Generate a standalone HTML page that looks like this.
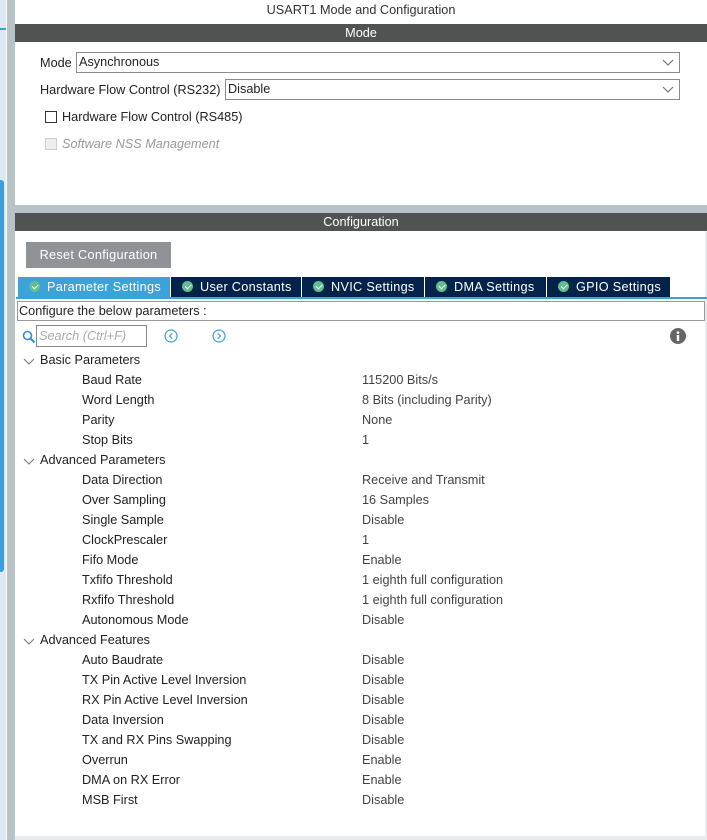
<!DOCTYPE html>
<html><head><style>
*{margin:0;padding:0;box-sizing:border-box}
body{width:707px;height:840px;position:relative;overflow:hidden;background:#fff;font-family:"Liberation Sans",sans-serif;font-size:12.7px;color:#222}
.a{position:absolute;white-space:nowrap}
.bar{position:absolute;left:15px;right:0;height:18px;background:#515352;color:#fff;text-align:center;font-size:12.7px;line-height:18px}
.sel{position:absolute;height:21px;border:1px solid #8c8c8c;background:#fff;padding-left:2px;line-height:19px}
.sel svg{position:absolute;right:5px;top:6px}
.tab{position:absolute;top:277px;height:20px;background:#03234b;color:#fff;line-height:20px;padding-left:29px;letter-spacing:.3px}
.tab::before{content:"";position:absolute;left:11px;top:4px;width:11px;height:11px;border-radius:50%;background:#5fbf8e}
.tab::after{content:"";position:absolute;left:14px;top:6.5px;width:5px;height:2.5px;border-left:1.6px solid #fff;border-bottom:1.6px solid #fff;transform:rotate(-45deg)}
.n{position:absolute;left:82px}
.v{position:absolute;left:362px;color:#444}
.h{position:absolute;left:40px}
.chev{position:absolute;left:23px}
</style></head><body>
<div class="a" style="left:0;top:0;width:6px;height:840px;background:#dce9f5"></div>
<div class="a" style="left:0;top:28px;width:6px;height:2px;background:#3c9fd8"></div>
<div class="a" style="left:0;top:180px;width:4px;height:392px;background:#3c9fd8;border-radius:0 3px 3px 0"></div>
<div class="a" style="left:7px;top:0;width:8px;height:840px;background:#b8c3c8"></div>
<div class="a" style="left:15px;top:205px;width:692px;height:8px;background:#b8c3c8"></div>
<div class="a" style="left:15px;top:836px;width:692px;height:4px;background:#e9ecee"></div>
<div class="a" style="left:705px;top:231px;width:2px;height:605px;background:#e9ecee"></div>

<div class="a" style="left:15px;right:0;top:3px;text-align:center;color:#333">USART1 Mode and Configuration</div>
<div class="bar" style="top:24px">Mode</div>
<div class="a" style="left:40px;top:56px">Mode</div>
<div class="sel" style="left:76px;top:52px;width:604px">Asynchronous<svg width="12" height="8"><path d="M1 1l5 5 5-5" fill="none" stroke="#777" stroke-width="1.2"/></svg></div>
<div class="a" style="left:40px;top:83px">Hardware Flow Control (RS232)</div>
<div class="sel" style="left:225px;top:79px;width:455px">Disable<svg width="12" height="8"><path d="M1 1l5 5 5-5" fill="none" stroke="#777" stroke-width="1.2"/></svg></div>
<div class="a" style="left:45px;top:111px;width:12px;height:12px;border:1px solid #333"></div>
<div class="a" style="left:62px;top:110px">Hardware Flow Control (RS485)</div>
<div class="a" style="left:45px;top:138px;width:12px;height:12px;border:1px solid #ccc;background:#eee"></div>
<div class="a" style="left:62px;top:137px;color:#999;font-style:italic">Software NSS Management</div>

<div class="bar" style="top:213px">Configuration</div>
<div class="a" style="left:26px;top:242px;width:145px;height:26px;background:#8f9396;color:#fff;text-align:center;line-height:26px;letter-spacing:.3px">Reset Configuration</div>
<div class="tab" style="left:18px;width:152px;background:#3ba3d8">Parameter Settings</div>
<div class="tab" style="left:171px;width:130px">User Constants</div>
<div class="tab" style="left:302px;width:122px">NVIC Settings</div>
<div class="tab" style="left:425px;width:121px">DMA Settings</div>
<div class="tab" style="left:547px;width:123px">GPIO Settings</div>
<div class="a" style="left:16px;top:297px;width:691px;height:2px;background:#3ba3d8"></div>
<div class="a" style="left:17px;top:301px;width:688px;height:20px;border:1px solid #999;padding-left:1px;line-height:18px">Configure the below parameters :</div>
<svg class="a" style="left:22px;top:330px" width="14" height="14"><circle cx="5.5" cy="5.5" r="4" fill="none" stroke="#2a8fd6" stroke-width="1.6"/><path d="M8.5 8.5l4 4" stroke="#2a8fd6" stroke-width="2"/></svg>
<div class="a" style="left:36px;top:325px;width:111px;height:22px;border:1px solid #888;padding-left:2px;line-height:20px;color:#aaa;font-style:italic">Search (Ctrl+F)</div>
<svg class="a" style="left:164px;top:329px" width="14" height="14"><circle cx="7" cy="7" r="6" fill="none" stroke="#3ba3d8" stroke-width="1.2"/><path d="M8.3 4.3L5.5 7l2.8 2.7" fill="none" stroke="#3ba3d8" stroke-width="1.2"/></svg>
<svg class="a" style="left:212px;top:329px" width="14" height="14"><circle cx="7" cy="7" r="6" fill="none" stroke="#3ba3d8" stroke-width="1.2"/><path d="M5.7 4.3L8.5 7l-2.8 2.7" fill="none" stroke="#3ba3d8" stroke-width="1.2"/></svg>
<svg class="a" style="left:670px;top:328px" width="16" height="16"><circle cx="8" cy="8" r="8" fill="#666"/><rect x="6.8" y="7" width="2.4" height="6" fill="#fff"/><circle cx="8" cy="4.6" r="1.3" fill="#fff"/></svg>

<div id="t"></div>
<script>
var rows=[["h","Basic Parameters"],["Baud Rate","115200 Bits/s"],["Word Length","8 Bits (including Parity)"],["Parity","None"],["Stop Bits","1"],["h","Advanced Parameters"],["Data Direction","Receive and Transmit"],["Over Sampling","16 Samples"],["Single Sample","Disable"],["ClockPrescaler","1"],["Fifo Mode","Enable"],["Txfifo Threshold","1 eighth full configuration"],["Rxfifo Threshold","1 eighth full configuration"],["Autonomous Mode","Disable"],["h","Advanced Features"],["Auto Baudrate","Disable"],["TX Pin Active Level Inversion","Disable"],["RX Pin Active Level Inversion","Disable"],["Data Inversion","Disable"],["TX and RX Pins Swapping","Disable"],["Overrun","Enable"],["DMA on RX Error","Enable"],["MSB First","Disable"]];
var h="";rows.forEach(function(r,i){var y=353+i*20;
if(r[0]=="h"){h+='<svg class="chev" style="top:'+(y+5)+'px" width="12" height="8"><path d="M1 1l5 5 5-5" fill="none" stroke="#777" stroke-width="1.1"/></svg><div class="h" style="top:'+y+'px">'+r[1]+'</div>';}
else h+='<div class="n" style="top:'+y+'px">'+r[0]+'</div><div class="v" style="top:'+y+'px">'+r[1]+'</div>';});
document.getElementById("t").innerHTML=h;
</script>
</body></html>
